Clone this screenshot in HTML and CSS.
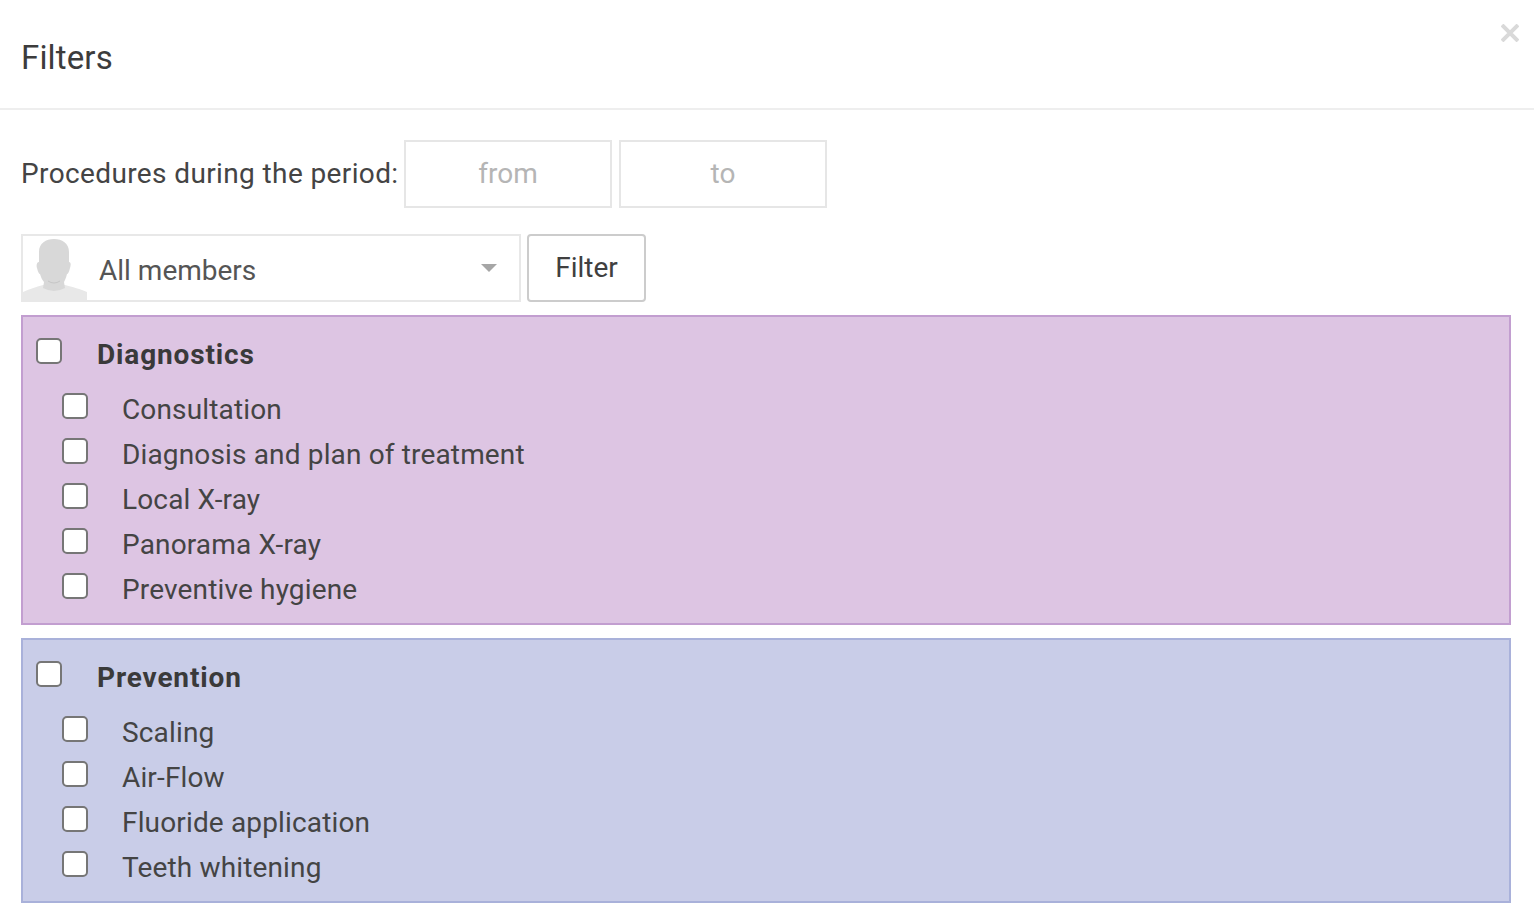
FILE: index.html
```html
<!DOCTYPE html>
<html lang="en">
<head>
<meta charset="utf-8">
<title>Filters</title>
<link rel="stylesheet" href="styles.css">
</head>
<body>
<div class="modal">
  <header class="modal-header">
    <h1 class="modal-title">Filters</h1>
    <button class="close" aria-label="Close">
      <svg viewBox="0 0 18 18" width="18" height="18"><path d="M1 1 17 17M17 1 1 17"/></svg>
    </button>
  </header>
  <div class="modal-body">
    <div class="period">
      <span class="period-label">Procedures during the period:</span>
      <input class="date" placeholder="from">
      <input class="date" placeholder="to">
    </div>
    <div class="member-row">
      <div class="select">
        <svg class="avatar" viewBox="0 0 64 62">
          <path class="shoulders" d="M0 62V54C6 51 13 49 20 47H42C49 49 58 51 64 54V62Z"/>
          <path class="head" d="M16 14C16 5 23 1 31 1C39 1 46 5 46 14L46 24C48 24 48 27 47 30C46 34 45 36 44 36C43 40 42 42 41 44L42 50Q31 56 20 50L21 44C19 42 18 39 17 36C16 36 15 34 14 30C13 27 14 24 16 24Z"/>
          <path class="chin" d="M25 43Q31 47 37 43"/>
        </svg>
        <span class="select-text">All members</span>
        <span class="caret"></span>
      </div>
      <button class="filter-btn">Filter</button>
    </div>
    <section class="group group-purple">
      <label class="group-head"><span class="check"></span><span class="group-name">Diagnostics</span></label>
      <label class="item"><span class="check"></span><span>Consultation</span></label>
      <label class="item"><span class="check"></span><span>Diagnosis and plan of treatment</span></label>
      <label class="item"><span class="check"></span><span>Local X-ray</span></label>
      <label class="item"><span class="check"></span><span>Panorama X-ray</span></label>
      <label class="item"><span class="check"></span><span>Preventive hygiene</span></label>
    </section>
    <section class="group group-blue">
      <label class="group-head"><span class="check"></span><span class="group-name">Prevention</span></label>
      <label class="item"><span class="check"></span><span>Scaling</span></label>
      <label class="item"><span class="check"></span><span>Air-Flow</span></label>
      <label class="item"><span class="check"></span><span>Fluoride application</span></label>
      <label class="item"><span class="check"></span><span>Teeth whitening</span></label>
    </section>
  </div>
</div>
</body>
</html>
```
FILE: styles.css
```css
* { box-sizing: border-box; }
html, body { margin: 0; height: 100%; }
body { background: #fff; color: #444; font-family: Roboto, sans-serif; overflow: hidden; }
.modal-header { position: relative; height: 110px; border-bottom: 2px solid #eee; padding: 38px 21px 0; }
.modal-title { margin: 0; font-size: 33px; line-height: 40px; font-weight: 400; letter-spacing: .15px; color: #3c3c3c; }
.close { position: absolute; top: 24px; right: 15px; width: 18px; height: 18px; padding: 0; border: 0; background: none; }
.close svg { display: block; fill: none; stroke: #d9d9d9; stroke-width: 4; }
.modal-body { padding: 30px 23px 0 21px; }
.period { display: flex; align-items: center; gap: 7px; height: 68px; }
.period-label { font-size: 28px; width: 376px; white-space: nowrap; letter-spacing: .38px; padding-bottom: 2px; }
.date { width: 208px; height: 68px; border: 2px solid #e6e6e6; background: #fff; text-align: center; font: inherit; font-size: 28px; padding: 0 0 2px; }
.date::placeholder { color: #b5b5b5; opacity: 1; }
.member-row { display: flex; gap: 6px; margin-top: 26px; height: 68px; }
.select { display: flex; align-items: center; width: 500px; border: 2px solid #e8e8e8; }
.avatar { width: 64px; height: 62px; margin-top: 2px; align-self: flex-end; flex: none; }
.head { fill: #d8d8d8; }
.shoulders { fill: #e8e8e8; }
.chin { fill: none; stroke: #c6c6c6; stroke-width: 1; }
.select-text { margin-left: 12px; font-size: 28px; color: #555; flex: 1; padding-top: 4px; }
.caret { width: 0; height: 0; border: 8px solid transparent; border-top: 8px solid #a6a6a6; border-bottom: 0; margin-right: 22px; }
.filter-btn { width: 119px; border: 2px solid #ccc; border-radius: 4px; background: #fff; color: #404040; font: inherit; font-size: 28px; padding: 0 0 1px; }
.group { margin-top: 13px; border: 2px solid; padding: 21px 13px 0; }
.group-purple { background: #ddc5e3; border-color: #c29ed0; height: 310px; }
.group-blue { background: #c9cde8; border-color: #a9b1da; height: 265px; }
.group-head, .item { display: flex; align-items: flex-start; }
.group-head { height: 55px; }
.item { height: 45px; padding-left: 26px; font-size: 28px; color: #444; }
.check { width: 26px; height: 26px; flex: none; background: #fff; border: 2px solid #767676; border-radius: 5px; }
.item .check + span { margin-left: 34px; margin-top: -1px; line-height: 36px; white-space: nowrap; letter-spacing: .15px; }
.group-name { margin-left: 35px; margin-top: -1px; font-size: 28px; font-weight: 700; letter-spacing: .85px; color: #3a3a3a; line-height: 36px; }
```
